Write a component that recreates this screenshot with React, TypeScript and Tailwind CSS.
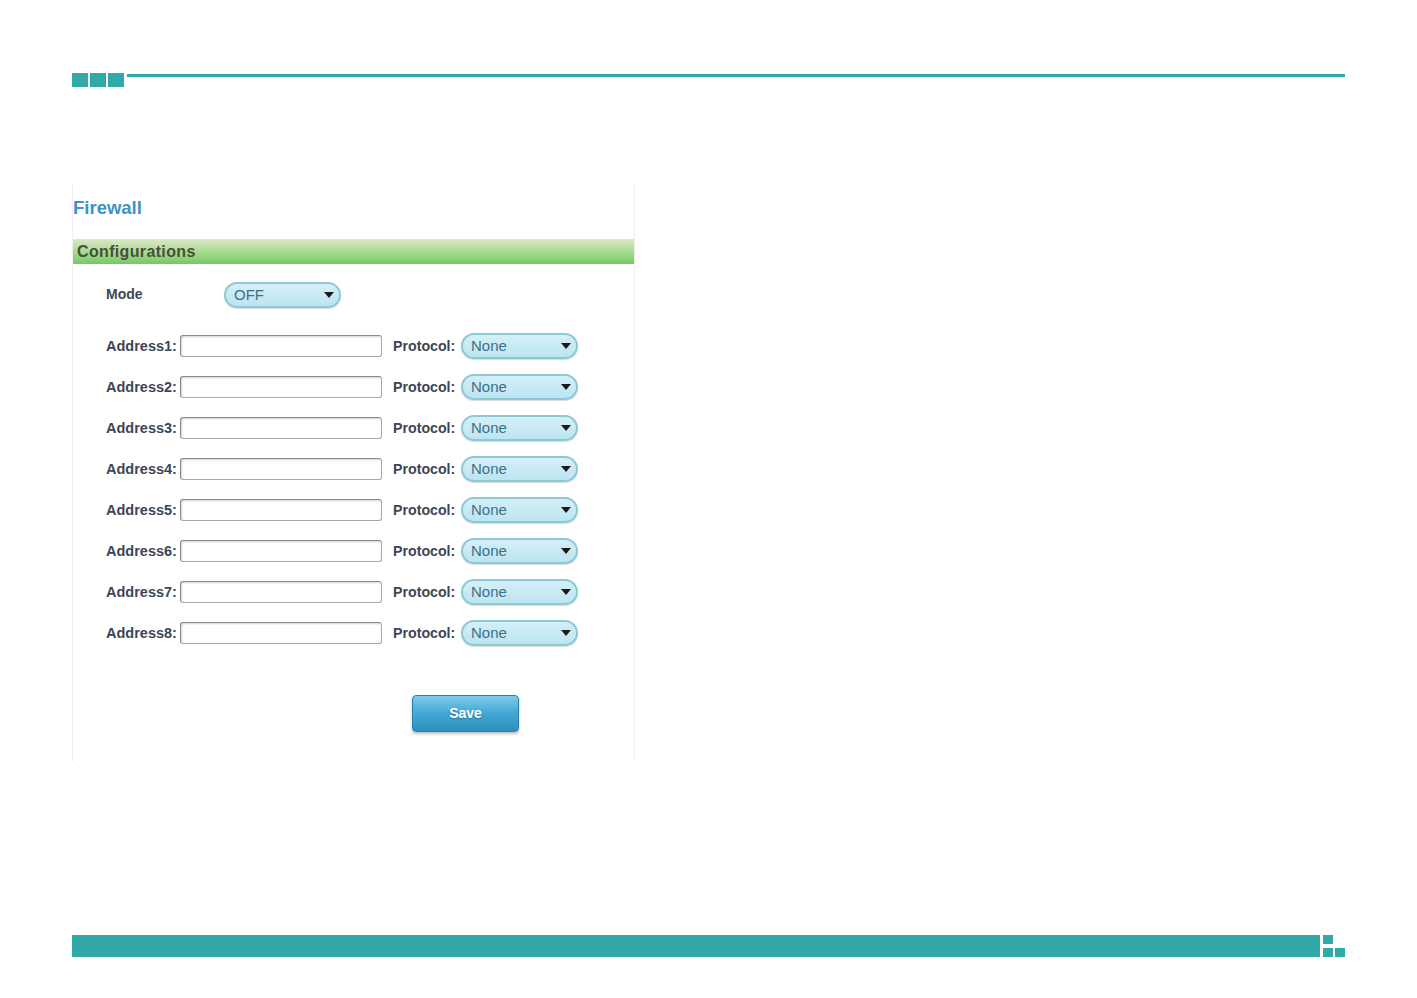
import React from "react";

function Select({ value, width }: { value: string; width: string }) {
  return (
    <div
      className={`${width} h-[26px] rounded-full border-2 border-[#8cc8d6] bg-gradient-to-b from-[#d3f0f8] to-[#bce5f1] flex items-center justify-between pl-[8px] pr-[5px] shadow-[0_1px_1px_rgba(0,0,0,0.15)]`}
    >
      <span className="text-[15px] leading-none text-[#3f6f86]">{value}</span>
      <svg width="10" height="6" viewBox="0 0 10 6">
        <path d="M0 0 L10 0 L5 6 Z" fill="#1a1a1a" />
      </svg>
    </div>
  );
}

export default function App() {
  const rows = [1, 2, 3, 4, 5, 6, 7, 8];
  return (
    <div
      className="w-[1417px] h-[998px] bg-white pt-[73px] px-[72px]"
      style={{ fontFamily: '"Liberation Sans", Arial, sans-serif' }}
    >
      {/* top header */}
      <div className="flex items-start">
        <div className="w-[16px] h-[14px] bg-[#31a9a9]" />
        <div className="w-[16px] h-[14px] bg-[#31a9a9] ml-[2px]" />
        <div className="w-[16px] h-[14px] bg-[#31a9a9] ml-[2px]" />
        <div className="flex-1 h-[3px] mt-[1px] ml-[3px] bg-[#31a9a9]" />
      </div>

      {/* panel */}
      <div className="mt-[98px] w-[563px] h-[577px] border-l border-r border-[#f0f0f0] flex flex-col">
        <div className="pt-[12px] h-[54px]">
          <span className="text-[18.5px] leading-[22px] font-bold text-[#3e93c6]">Firewall</span>
        </div>
        <div className="h-[25px] bg-gradient-to-b from-[#dce8c8] via-[#a8dc90] to-[#72c962] flex items-center pl-[4px]">
          <span className="text-[16px] font-bold tracking-[0.35px] text-[#4b4d3e]">Configurations</span>
        </div>

        <div className="pl-[33px] mt-[10px] flex flex-col">
          <div className="h-[41px] flex items-center">
            <span className="w-[118px] text-[14px] font-bold text-[#3d4656]">Mode</span>
            <Select value="OFF" width="w-[117px]" />
          </div>
          <div className="mt-[10px] flex flex-col">
            {rows.map((n) => (
              <div key={n} className="h-[41px] flex items-center">
                <span className="w-[74px] pt-[2px] text-[14.5px] font-bold text-[#3d4656]">Address{n}:</span>
                <div className="w-[202px] h-[22px] rounded-[3px] border border-[#a8a8a8] border-t-[#8a8a8a] border-l-[#8a8a8a] bg-white shadow-[inset_1px_1px_2px_rgba(0,0,0,0.18)]" />
                <span className="ml-[11px] w-[68px] pt-[2px] text-[14.2px] font-bold text-[#3d4656]">Protocol:</span>
                <Select value="None" width="w-[117px]" />
              </div>
            ))}
          </div>
          <div className="mt-[42px] pl-[306px]">
            <div className="w-[107px] h-[37px] rounded-[4px] border border-[#2c80aa] bg-gradient-to-b from-[#7ccbea] via-[#43a6d3] to-[#2e8fc0] flex items-center justify-center shadow-[0_2px_3px_rgba(0,0,0,0.25)]">
              <span className="text-[14px] font-bold text-white [text-shadow:0_1px_1px_rgba(0,0,0,0.3)]">Save</span>
            </div>
          </div>
        </div>
      </div>

      {/* bottom bar */}
      <div className="mt-[173px] flex items-start">
        <div className="flex-1 h-[22px] bg-[#31a9a9]" />
        <div className="ml-[3px] w-[22px] h-[22px] flex flex-col justify-between">
          <div className="w-[10px] h-[9px] bg-[#31a9a9]" />
          <div className="flex justify-between">
            <div className="w-[10px] h-[9px] bg-[#31a9a9]" />
            <div className="w-[10px] h-[9px] bg-[#31a9a9]" />
          </div>
        </div>
      </div>
    </div>
  );
}
